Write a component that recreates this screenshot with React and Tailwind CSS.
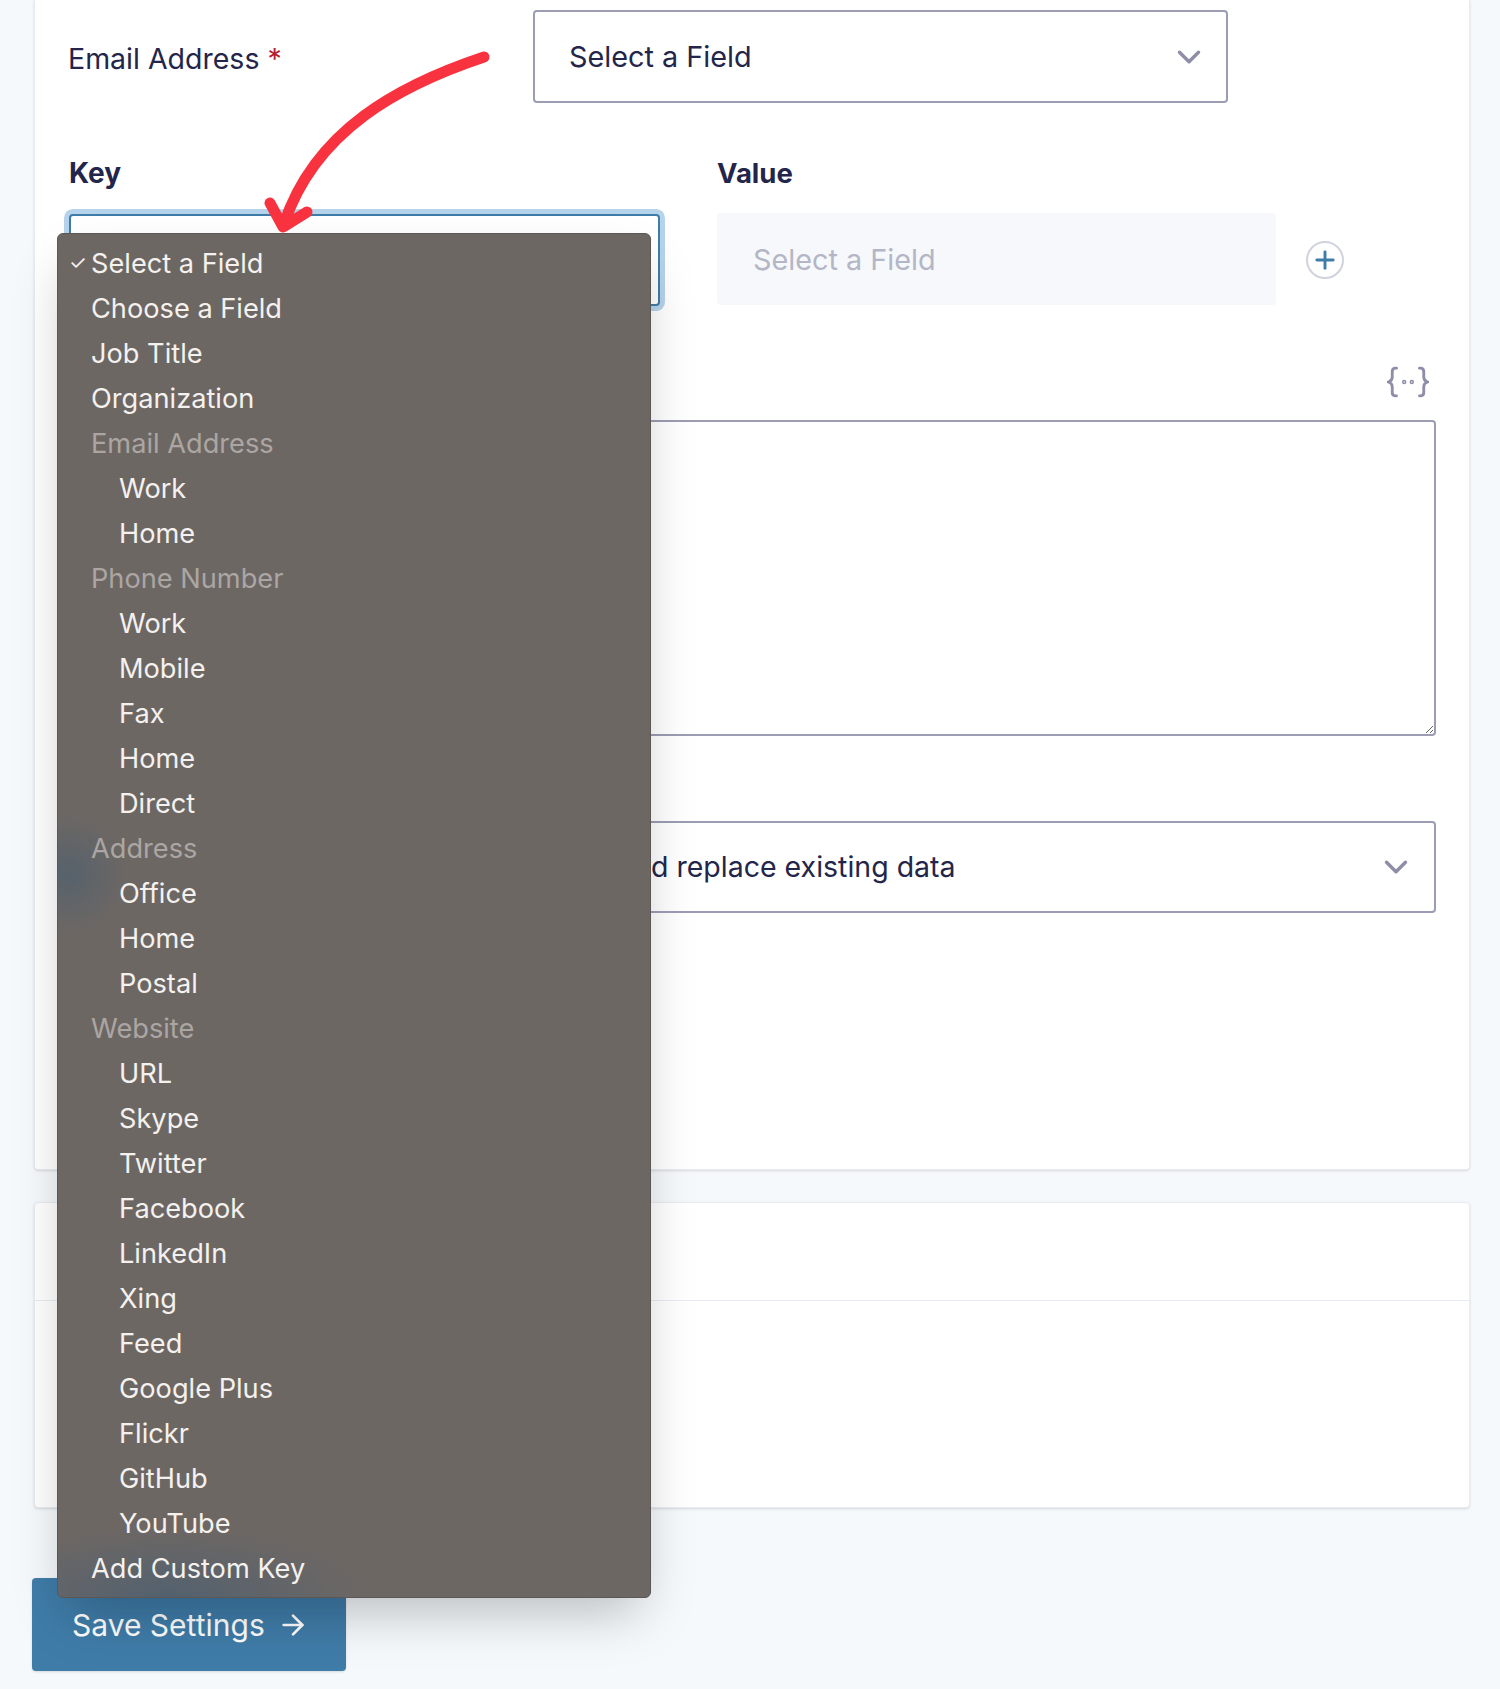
import React from 'react';
import { ChevronDown, ArrowRight, Plus } from 'lucide-react';

const menuItems = [
  { label: 'Select a Field', checked: true },
  { label: 'Choose a Field' },
  { label: 'Job Title' },
  { label: 'Organization' },
  { label: 'Email Address', group: true },
  { label: 'Work', nested: true },
  { label: 'Home', nested: true },
  { label: 'Phone Number', group: true },
  { label: 'Work', nested: true },
  { label: 'Mobile', nested: true },
  { label: 'Fax', nested: true },
  { label: 'Home', nested: true },
  { label: 'Direct', nested: true },
  { label: 'Address', group: true },
  { label: 'Office', nested: true },
  { label: 'Home', nested: true },
  { label: 'Postal', nested: true },
  { label: 'Website', group: true },
  { label: 'URL', nested: true },
  { label: 'Skype', nested: true },
  { label: 'Twitter', nested: true },
  { label: 'Facebook', nested: true },
  { label: 'LinkedIn', nested: true },
  { label: 'Xing', nested: true },
  { label: 'Feed', nested: true },
  { label: 'Google Plus', nested: true },
  { label: 'Flickr', nested: true },
  { label: 'GitHub', nested: true },
  { label: 'YouTube', nested: true },
  { label: 'Add Custom Key' },
];

const App = () => {
  return (
    <div className="relative h-[1689px] overflow-hidden bg-[#f5f9fc] pl-[32px] font-['Inter',sans-serif] text-[28.5px] text-[#23264a]">
      <div className="ml-[2px] h-[1170px] w-[1436px] rounded-b border-x border-b border-[#e8ebf1] bg-white px-[34px] pt-[10px] shadow-sm">
        <div className="flex items-center">
          <div className="-ml-[1px] w-[465px] pt-[5px]">
            Email Address <span className="text-[#b3202c]">*</span>
          </div>
          <div className="flex h-[93px] w-[695px] items-center justify-between rounded border-2 border-[#9c9cb4] pl-[34px] pr-[18px]">
            <span className="pt-[1px] text-[28.8px]">Select a Field</span>
            <ChevronDown className="h-[38px] w-[38px] text-[#8e8ea8]" strokeWidth={2.2} />
          </div>
        </div>

        <div className="mt-[50px] flex">
          <div className="w-[591px]">
            <div className="h-[40px] text-[28px] leading-[40px] font-bold">Key</div>
            <div className="mt-[21px] h-[92px] rounded border-2 border-[#3f7ca8] bg-white ring-[5px] ring-[#b5d3ea]"></div>
          </div>
          <div className="ml-[57px] w-[559px]">
            <div className="h-[40px] text-[27.5px] leading-[40px] font-bold">Value</div>
            <div className="mt-[20px] flex h-[92px] items-center rounded bg-[#f7f8fb] pl-[36px] pt-[2px] text-[28.8px] text-[#b3b6c6]">Select a Field</div>
          </div>
          <div className="ml-[30px] mt-[61px] flex h-[92px] items-center">
            <div className="flex h-[38px] w-[38px] items-center justify-center rounded-full border-2 border-[#d0d2de]">
              <Plus className="h-[28px] w-[28px] text-[#3f7ca8]" strokeWidth={2.5} />
            </div>
          </div>
        </div>

        <div className="mt-[60px] flex h-[32px] justify-end pr-[6px]">
          <svg width="42" height="32" viewBox="0 0 44 32" fill="none" stroke="#8e8ea8" strokeWidth="3" strokeLinecap="round">
            <path d="M10 1.5H9C6.5 1.5 5.5 3 5.5 5V11C5.5 13.5 4.5 15 1.5 16C4.5 17 5.5 18.5 5.5 21V27C5.5 29 6.5 30.5 9 30.5H10" />
            <path d="M34 1.5H35C37.5 1.5 38.5 3 38.5 5V11C38.5 13.5 39.5 15 42.5 16C39.5 17 38.5 18.5 38.5 21V27C38.5 29 37.5 30.5 35 30.5H34" />
            <circle cx="18" cy="16" r="0.8" />
            <circle cx="26" cy="16" r="0.8" />
          </svg>
        </div>

        <textarea className="mt-[22px] block h-[316px] w-[1367px] rounded border-2 border-[#9c9cb4] bg-white"></textarea>

        <div className="mt-[85px] flex h-[92px] w-[1367px] items-center justify-between rounded border-2 border-[#9c9cb4] pl-[580px] pr-[19px]">
          <span>d replace existing data</span>
          <ChevronDown className="h-[38px] w-[38px] text-[#8e8ea8]" strokeWidth={2.2} />
        </div>
      </div>

      <div className="ml-[2px] mt-[32px] h-[306px] w-[1436px] rounded border border-[#e8ebf1] bg-white shadow-sm">
        <div className="h-[98px] border-b border-[#e8ebf1]"></div>
      </div>

      <button className="mt-[70px] flex h-[93px] w-[314px] items-center rounded bg-[#3f7ca8] pl-[40px] pt-[1px] text-[30px] text-white shadow-sm">
        Save Settings
        <ArrowRight className="ml-[12px] h-[32px] w-[32px]" strokeWidth={2} />
      </button>

      <div className="absolute left-[57px] top-[233px] h-[1365px] w-[594px] overflow-hidden rounded-md border border-[#5c5654] bg-[#6d6764] pt-[7px] text-[27.2px] text-[#f4f1ee] shadow-2xl">
        {/* blue tint from what sits under the translucent native menu */}
        <div className="absolute left-0 top-[570px] h-[140px] w-[110px] bg-[radial-gradient(ellipse_60px_60px_at_10px_70px,#56626b_0,transparent_100%)]"></div>
        <div className="absolute bottom-0 left-0 h-[90px] w-[400px] bg-[radial-gradient(ellipse_200px_70px_at_110px_90px,#53616e_0,transparent_100%)]"></div>
        {menuItems.map((item, index) => (
          <div
            key={index}
            className={`relative h-[45px] leading-[45px] ${item.nested ? 'pl-[61px]' : 'pl-[33px]'} ${item.group ? 'text-[#aba6a3]' : ''}`}
          >
            {item.checked && <span className="absolute left-[11px] top-0 text-[20px]">✓</span>}
            {item.label}
          </div>
        ))}
      </div>

      <svg className="absolute left-0 top-0" width="520" height="240" viewBox="0 0 520 240" fill="none" stroke="#f8333f" strokeWidth="11" strokeLinecap="round" strokeLinejoin="round">
        <path d="M484 57C400 85 315 130 284 224" />
        <path d="M270 203L283 227L307 212" />
      </svg>
    </div>
  );
};

export default App;
